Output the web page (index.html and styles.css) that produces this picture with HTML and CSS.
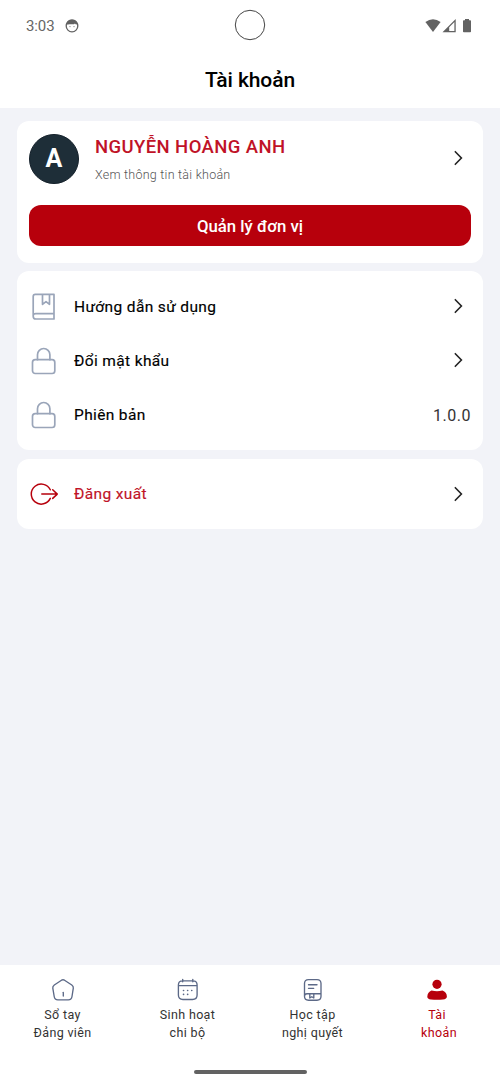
FILE: index.html
```html
<!DOCTYPE html>
<html lang="vi">
<head>
<meta charset="utf-8">
<title>Tài khoản</title>
<link rel="stylesheet" href="styles.css">
</head>
<body>
<div class="screen">
  <header class="top">
    <div class="status">
      <div class="status-left">
        <span class="time">3:03</span>
        <svg width="14" height="14" viewBox="0 0 14 14"><circle cx="7" cy="7" r="5.8" fill="none" stroke="#626262" stroke-width="1.3"/><path d="M1 5.600Q2 .6 7 .6T13 5.600L10.500 5.200 10 4.400 9 5.200H4.500L3 5.500Z" fill="#626262"/><circle cx="5" cy="7.6" r=".6" fill="#777"/><circle cx="9" cy="7.6" r=".6" fill="#777"/></svg>
      </div>
      <svg class="camera" width="32" height="32" viewBox="0 0 32 32"><circle cx="16" cy="16" r="14.7" fill="none" stroke="#444" stroke-width="1"/></svg>
      <svg class="signals" width="48" height="16" viewBox="0 0 48 16"><g fill="#626262"><path d="M.4 4Q8 -1.6 15.6 4L8 14Z"/><path d="M17.5 14.2L30.7 1V14.2ZM24.2 13H29.4V4L24.2 9.2Z" fill-rule="evenodd"/><path d="M40 1h4v1.3h1.2q.8 0 .8.8v10.3q0 .8-.8.8h-6.4q-.8 0-.8-.8V3.100q0-.8.8-.8H40Z"/></g></svg>
    </div>
    <h1 class="title">Tài khoản</h1>
  </header>

  <main class="content">
    <section class="card profile">
      <div class="profile-row">
        <div class="avatar">A</div>
        <div class="who">
          <div class="name">NGUYỄN HOÀNG ANH</div>
          <div class="hint">Xem thông tin tài khoản</div>
        </div>
        <svg class="chevron raised" width="10" height="16" viewBox="0 0 10 16"><path d="M1.300 1.700L7.400 8 1.300 14.300"/></svg>
      </div>
      <button class="manage">Quản lý đơn vị</button>
    </section>

    <section class="card menu">
      <div class="item">
        <svg class="icon" width="28" height="30" viewBox="0 0 28 30"><path d="M4.200 24V4.500Q4.200 2.400 6.300 2.400H25V27H6.800Q4.200 27 4.200 24.300T6.800 21.600H25M13.500 2.400V12.300L17 9.600 20.500 12.300V2.400"/></svg>
        <span class="label">Hướng dẫn sử dụng</span>
        <svg class="chevron raised" width="10" height="16" viewBox="0 0 10 16"><path d="M1.300 1.700L7.400 8 1.300 14.300"/></svg>
      </div>
      <div class="item">
        <svg class="icon" width="28" height="30" viewBox="0 0 28 30"><rect x="3.500" y="13.700" width="22.300" height="13.800" rx="2.700"/><path d="M8.500 13.700V8.700a6.200 6.200 0 0 1 12.400 0V13.700"/></svg>
        <span class="label">Đổi mật khẩu</span>
        <svg class="chevron raised" width="10" height="16" viewBox="0 0 10 16"><path d="M1.300 1.700L7.400 8 1.300 14.300"/></svg>
      </div>
      <div class="item">
        <svg class="icon" width="28" height="30" viewBox="0 0 28 30"><rect x="3.500" y="13.700" width="22.300" height="13.800" rx="2.700"/><path d="M8.500 13.700V8.700a6.200 6.200 0 0 1 12.400 0V13.700"/></svg>
        <span class="label">Phiên bản</span>
        <span class="version">1.0.0</span>
      </div>
    </section>

    <section class="card logout">
      <div class="item">
        <svg class="icon red" width="30" height="30" viewBox="0 0 30 30"><path d="M21.300 10.800A10 10 0 1 0 21.300 19.400M12.800 15.100H28.300M23.700 10.800L28.300 15.100 23.700 19.400"/></svg>
        <span class="label red">Đăng xuất</span>
        <svg class="chevron" width="10" height="16" viewBox="0 0 10 16"><path d="M1.300 1.700L7.400 8 1.300 14.300"/></svg>
      </div>
    </section>
  </main>

  <footer class="bottom">
    <nav class="tabs">
      <div class="tab">
        <svg width="24" height="24" viewBox="0 0 24 24"><path d="M10.500 2.200Q12 1.400 13.500 2.200L20.800 7Q22.600 8.300 22.300 10.200L21 18.500Q20.500 21.800 17.300 21.800H6.900Q3.700 21.800 3.200 18.500L1.800 10.200Q1.500 8.300 3.300 7Z"/><path d="M12.300 14.300V18"/></svg>
        <span>Sổ tay</span><span>Đảng viên</span>
      </div>
      <div class="tab">
        <svg width="24" height="24" viewBox="-.5 0 24 24"><path d="M7 2.900H17.500Q21.600 2.900 21.600 7V17Q21.600 21.500 17 21.500H7.400Q2.900 21.500 2.900 17V7Q2.900 2.900 7 2.900ZM3 7.600H21.500M7.200 1.300V3.800M17.300 1.300V3.800"/><path d="M8 12.500h.1M12.100 12.500h.1M16.200 12.500h.1M8 16.400h.1M12.100 16.400h.1" stroke-width="1.600"/></svg>
        <span>Sinh hoạt</span><span>chi bộ</span>
      </div>
      <div class="tab">
        <svg width="24" height="24" viewBox="-.5 0 24 24"><path d="M8 1.600H16.500Q20.500 1.600 20.500 5.600V18.300Q20.500 22.200 16.500 22.200H8Q4 22.200 4 18.300V5.600Q4 1.600 8 1.600ZM4 18.200Q4 15.700 6.500 15.700H20.500M8 6.700H16.500M8 10.300H13.200"/><path d="M9.300 15.700V20L11.300 18.700 13.300 20V15.700"/></svg>
        <span>Học tập</span><span>nghị quyết</span>
      </div>
      <div class="tab active">
        <svg width="24" height="24" viewBox="0 0 24 24"><circle cx="12" cy="6.300" r="4.600"/><path d="M6.500 12.600Q9.500 13.200 12 13.300 14.500 13.200 17.500 12.600 21.600 14 21.900 18.500 21.800 21.200 18 21.500 12 22 6 21.500 2.200 21.200 2.300 18.500 2.700 14 6.500 12.600Z"/></svg>
        <span class="first">Tài</span><span class="second">khoản</span>
      </div>
    </nav>
    <div class="home-bar"></div>
  </footer>
</div>
</body>
</html>
```
FILE: styles.css
```css
* { box-sizing: border-box; }
body { margin: 0; font-family: Roboto, "Noto Sans", sans-serif; background: #f2f3f8; color: #111; }
.screen { width: 500px; height: 1084px; display: flex; flex-direction: column; overflow: hidden; }
svg { display: block; flex: none; }

.top { background: #fff; height: 108px; flex: none; }
.status { height: 52px; padding: 0 26px; display: grid; grid-template-columns: 1fr 32px 1fr; align-items: center; }
.status-left { display: flex; align-items: center; gap: 10px; }
.time { font-size: 15px; color: #666; letter-spacing: -.1px; }
.status-left svg { margin-top: -1px; }
.camera { margin-top: -2px; }
.signals { justify-self: end; margin: -1px 1px 0 0; }
.title { margin: 14px 0 0; font-size: 21px; line-height: 28px; font-weight: 500; text-align: center; color: #000; letter-spacing: -.1px; }

.content { flex: 1; padding: 13px 17px 0; display: flex; flex-direction: column; gap: 8.500px; }
.card { background: #fff; border-radius: 12px; padding: 0 12px; }
.profile { height: 141.500px; padding-top: 12.500px; }
.profile-row { display: flex; align-items: center; height: 50px; }
.avatar { width: 50px; height: 50px; border-radius: 50%; background: #1e2e38; border: 1px solid #14202a; color: #fff; font-size: 25px; font-weight: 700; display: flex; align-items: center; justify-content: center; }
.who { flex: 1; padding: 1px 0 0 16px; }
.name { font-size: 18.500px; line-height: 26px; font-weight: 500; color: #c01227; letter-spacing: .4px; }
.hint { margin-top: 5px; font-size: 12.500px; line-height: 20px; color: #555; font-weight: 300; letter-spacing: .25px; }
.chevron { fill: none; stroke: #222; stroke-width: 1.600; stroke-linecap: round; margin-right: 7px; }
.chevron.raised { margin-bottom: 2px; }
.manage { display: block; width: 100%; height: 41.500px; margin-top: 21px; border: 0; border-radius: 12px; background: #b7000c; color: #fff; font: 500 16.800px/42px Roboto, sans-serif; padding: 0; }

.menu { height: 179px; padding-top: 8.500px; }
.item { display: flex; align-items: center; height: 54px; }
.icon { fill: none; stroke: #9aa5b9; stroke-width: 1.700; stroke-linejoin: round; stroke-linecap: round; }
.icon.red { stroke: #b7000c; stroke-width: 1.500; margin-right: -2px; }
.label { flex: 1; padding-left: 17px; font-size: 15.500px; letter-spacing: .36px; font-weight: 400; color: #000; -webkit-text-stroke: .15px currentColor; }
.label.red { color: #c01227; }
.version { font-size: 16px; color: #333; letter-spacing: .5px; padding-top: 1px; }
.logout { height: 70.500px; padding-top: 8px; }

.bottom { background: #fff; height: 119px; flex: none; }
.tabs { display: grid; grid-template-columns: repeat(4, 1fr); padding-top: 13px; }
.tab { display: flex; flex-direction: column; align-items: center; font-size: 12.500px; line-height: 18px; color: #333; letter-spacing: .35px; }
.tab svg { margin: 0 1px 4px 0; fill: none; stroke: #5c6987; stroke-width: 1.350; stroke-linecap: round; stroke-linejoin: round; }
.tab:first-child svg { margin-right: 0; }
.tab.active { color: #b7000c; }
.tab.active svg { fill: #b7000c; stroke: none; }
.first { padding-right: 1px; }
.second { padding-left: 3px; }
.home-bar { width: 113px; height: 4px; border-radius: 2px; background: #626262; margin: 27.500px auto 0; }
```
